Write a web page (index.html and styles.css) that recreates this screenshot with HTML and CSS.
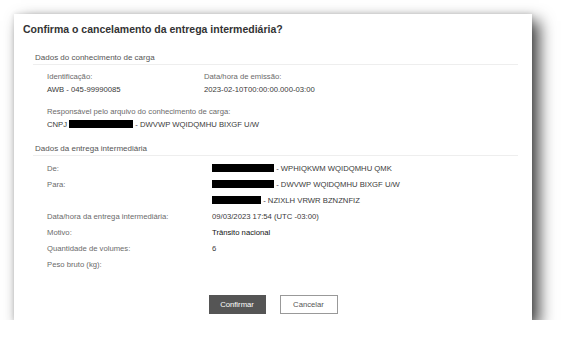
FILE: index.html
```html
<!DOCTYPE html>
<html lang="pt-BR">
<head>
    <meta charset="UTF-8">
    <title>Cancelamento da entrega intermediária</title>
    <link rel="stylesheet" href="styles.css">
</head>
<body>
    <div class="dialog">
        <h1>Confirma o cancelamento da entrega intermediária?</h1>

        <div class="section">
            <h2>Dados do conhecimento de carga</h2>
            <div class="grid">
                <div>
                    <p class="label">Identificação:</p>
                    <p class="value">AWB - 045-99990085</p>
                </div>
                <div>
                    <p class="label">Data/hora de emissão:</p>
                    <p class="value">2023-02-10T00:00:00.000-03:00</p>
                </div>
            </div>
            <div class="block">
                <p class="label">Responsável pelo arquivo do conhecimento de carga:</p>
                <p class="value">CNPJ <span class="redact w64"></span> - DWVWP WQIDQMHU BIXGF U/W</p>
            </div>
        </div>

        <div class="section">
            <h2>Dados da entrega intermediária</h2>
            <div class="rows">
                <span class="label">De:</span>
                <span class="value"><span class="redact w62"></span> - WPHIQKWM WQIDQMHU QMK</span>
                <span class="label">Para:</span>
                <span class="value"><span class="redact w62"></span> - DWVWP WQIDQMHU BIXGF U/W</span>
                <span class="label"></span>
                <span class="value"><span class="redact w49"></span> - NZIXLH VRWR BZNZNFIZ</span>
                <span class="label">Data/hora da entrega intermediária:</span>
                <span class="value">09/03/2023 17:54 (UTC -03:00)</span>
                <span class="label">Motivo:</span>
                <span class="value strong">Trânsito nacional</span>
                <span class="label">Quantidade de volumes:</span>
                <span class="value">6</span>
                <span class="label">Peso bruto (kg):</span>
                <span class="value"></span>
            </div>
        </div>

        <div class="actions">
            <button class="btn primary">Confirmar</button>
            <button class="btn">Cancelar</button>
        </div>
    </div>
</body>
</html>
```

FILE: styles.css
```css
* { box-sizing: border-box; }
body {
    margin: 0;
    background: #fff;
    font-family: "Liberation Sans", Arial, sans-serif;
    color: #333;
}
.dialog {
    margin: 14px 0 0 14px;
    width: 518px;
    height: 306px;
    background: #fff;
    padding: 8px 14px 0 9px;
    box-shadow: 7px 7px 15px rgba(0,0,0,0.75), 0 0 5px rgba(0,0,0,0.12);
}
h1 {
    margin: 0;
    font-size: 10.5px;
    line-height: 14px;
    font-weight: bold;
    color: #333;
}
.section {
    margin-left: 10px;
}
h2 {
    margin: 16px 0 0;
    padding-left: 2px;
    font-size: 8px;
    line-height: 12px;
    font-weight: normal;
    color: #555;
    border-bottom: 1px solid #eee;
}
p { margin: 0; }
.label, .value {
    font-size: 7.7px;
    line-height: 13px;
}
.label { color: #6a6a6a; }
.value { color: #3a3a3a; }
.strong { color: #111; }
.grid {
    display: grid;
    grid-template-columns: 157px 1fr;
    padding: 5px 0 0 14px;
}
.block {
    padding: 9px 0 0 14px;
}
.section + .section h2 {
    margin-top: 12px;
}
.rows {
    display: grid;
    grid-template-columns: 165px 1fr;
    padding: 5px 0 0 14px;
}
.rows .label, .rows .value {
    line-height: 16px;
    height: 16px;
}
.redact {
    display: inline-block;
    height: 8px;
    background: #000;
    vertical-align: -1px;
}
.w64 { width: 64px; }
.w62 { width: 62px; }
.w49 { width: 49px; }
.actions {
    display: flex;
    justify-content: center;
    gap: 14px;
    margin-top: 22px;
    padding-left: 5px;
}
.btn {
    width: 58px;
    height: 19px;
    padding: 0;
    font-family: inherit;
    font-size: 7.7px;
    color: #555;
    background: #fff;
    border: 1px solid #999;
    border-radius: 0;
}
.btn.primary {
    background: #555;
    border-color: #555;
    color: #fff;
    width: 57px;
}
```
